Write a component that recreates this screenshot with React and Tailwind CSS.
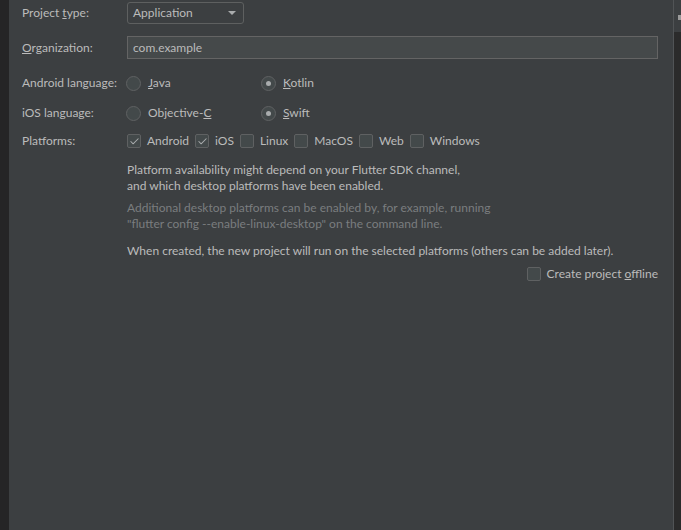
import { Check } from "lucide-react";

const font = { fontFamily: "Lato, 'Noto Sans', sans-serif" };

function Radio({ checked, children, className = "" }) {
  return (
    <label className={`flex items-center gap-[7px] ${className}`}>
      <span className="w-[15px] h-[15px] rounded-full border border-[#5f6162] bg-[#43494a] flex items-center justify-center">
        {checked && <span className="w-[5px] h-[5px] rounded-full bg-[#a9acad]" />}
      </span>
      <span>{children}</span>
    </label>
  );
}

function Box({ checked, children }) {
  return (
    <label className="flex items-center gap-[6px]">
      <span className="w-[14px] h-[14px] rounded-[2px] border border-[#5f6162] bg-[#43494a] flex items-center justify-center">
        {checked && <Check size={11} strokeWidth={2.25} className="text-[#a9acad]" />}
      </span>
      <span>{children}</span>
    </label>
  );
}

export default function App() {
  return (
    <div className="h-[530px] w-full flex bg-[#252526] text-[12px] text-[#bbbbbb]" style={font}>
      <div className="w-[9px] shrink-0" />
      <div className="flex-1 bg-[#3c3f41] border-r border-[#515456] pl-[13px] pr-[15px] pt-[2px]">
        <div className="flex items-center h-[22px]">
          <div className="w-[105px]">Project <u>t</u>ype:</div>
          <div className="w-[117px] h-[22px] border border-[#5e6060] rounded-[3px] flex items-center justify-between pl-[5px] pr-[7px]">
            <span>Application</span>
            <svg width="8" height="4" viewBox="0 0 8 4"><path d="M0 0h8L4 4z" fill="#a9acad" /></svg>
          </div>
        </div>

        <div className="flex items-center h-[23px] mt-[12px]">
          <div className="w-[105px]"><u>O</u>rganization:</div>
          <div className="flex-1 h-[23px] border border-[#646464] bg-[#45494a] flex items-center px-[5px]">com.example</div>
        </div>

        <div className="flex items-center h-[24px] mt-[12px]">
          <div className="w-[104px]">Android language:</div>
          <Radio className="w-[135px]"><u>J</u>ava</Radio>
          <Radio checked><u>K</u>otlin</Radio>
        </div>

        <div className="flex items-center h-[24px] mt-[6px]">
          <div className="w-[104px]">iOS language:</div>
          <Radio className="w-[135px]">Objective-<u>C</u></Radio>
          <Radio checked><u>S</u>wift</Radio>
        </div>

        <div className="flex items-center h-[24px] mt-[4px]">
          <div className="w-[105px]">Platforms:</div>
          <div className="flex items-center gap-[6px]">
            <Box checked>Android</Box>
            <Box checked>iOS</Box>
            <Box>Linux</Box>
            <Box>MacOS</Box>
            <Box>Web</Box>
            <Box>Windows</Box>
          </div>
        </div>

        <div className="pl-[105px] leading-[16px]">
          <p className="mt-[9px]">
            Platform availability might depend on your Flutter SDK channel,
            <br />
            and which desktop platforms have been enabled.
          </p>
          <p className="mt-[6px] text-[#7a7d7f]">
            Additional desktop platforms can be enabled by, for example, running
            <br />
            "flutter config --enable-linux-desktop" on the command line.
          </p>
          <p className="mt-[11px]">
            When created, the new project will run on the selected platforms (others can be added later).
          </p>
          <div className="flex justify-end mt-[7px]">
            <Box>Create project <u>o</u>ffline</Box>
          </div>
        </div>
      </div>
      <div className="w-[7px] shrink-0 flex flex-col">
        <div className="h-[32px] bg-[#3c3f41] pt-[15px] pl-[4px]">
          <div className="w-[3px] h-[5px] bg-[#9a9a9a]" />
        </div>
        <div className="flex-1 bg-[#2b2b2b]" />
      </div>
    </div>
  );
}
